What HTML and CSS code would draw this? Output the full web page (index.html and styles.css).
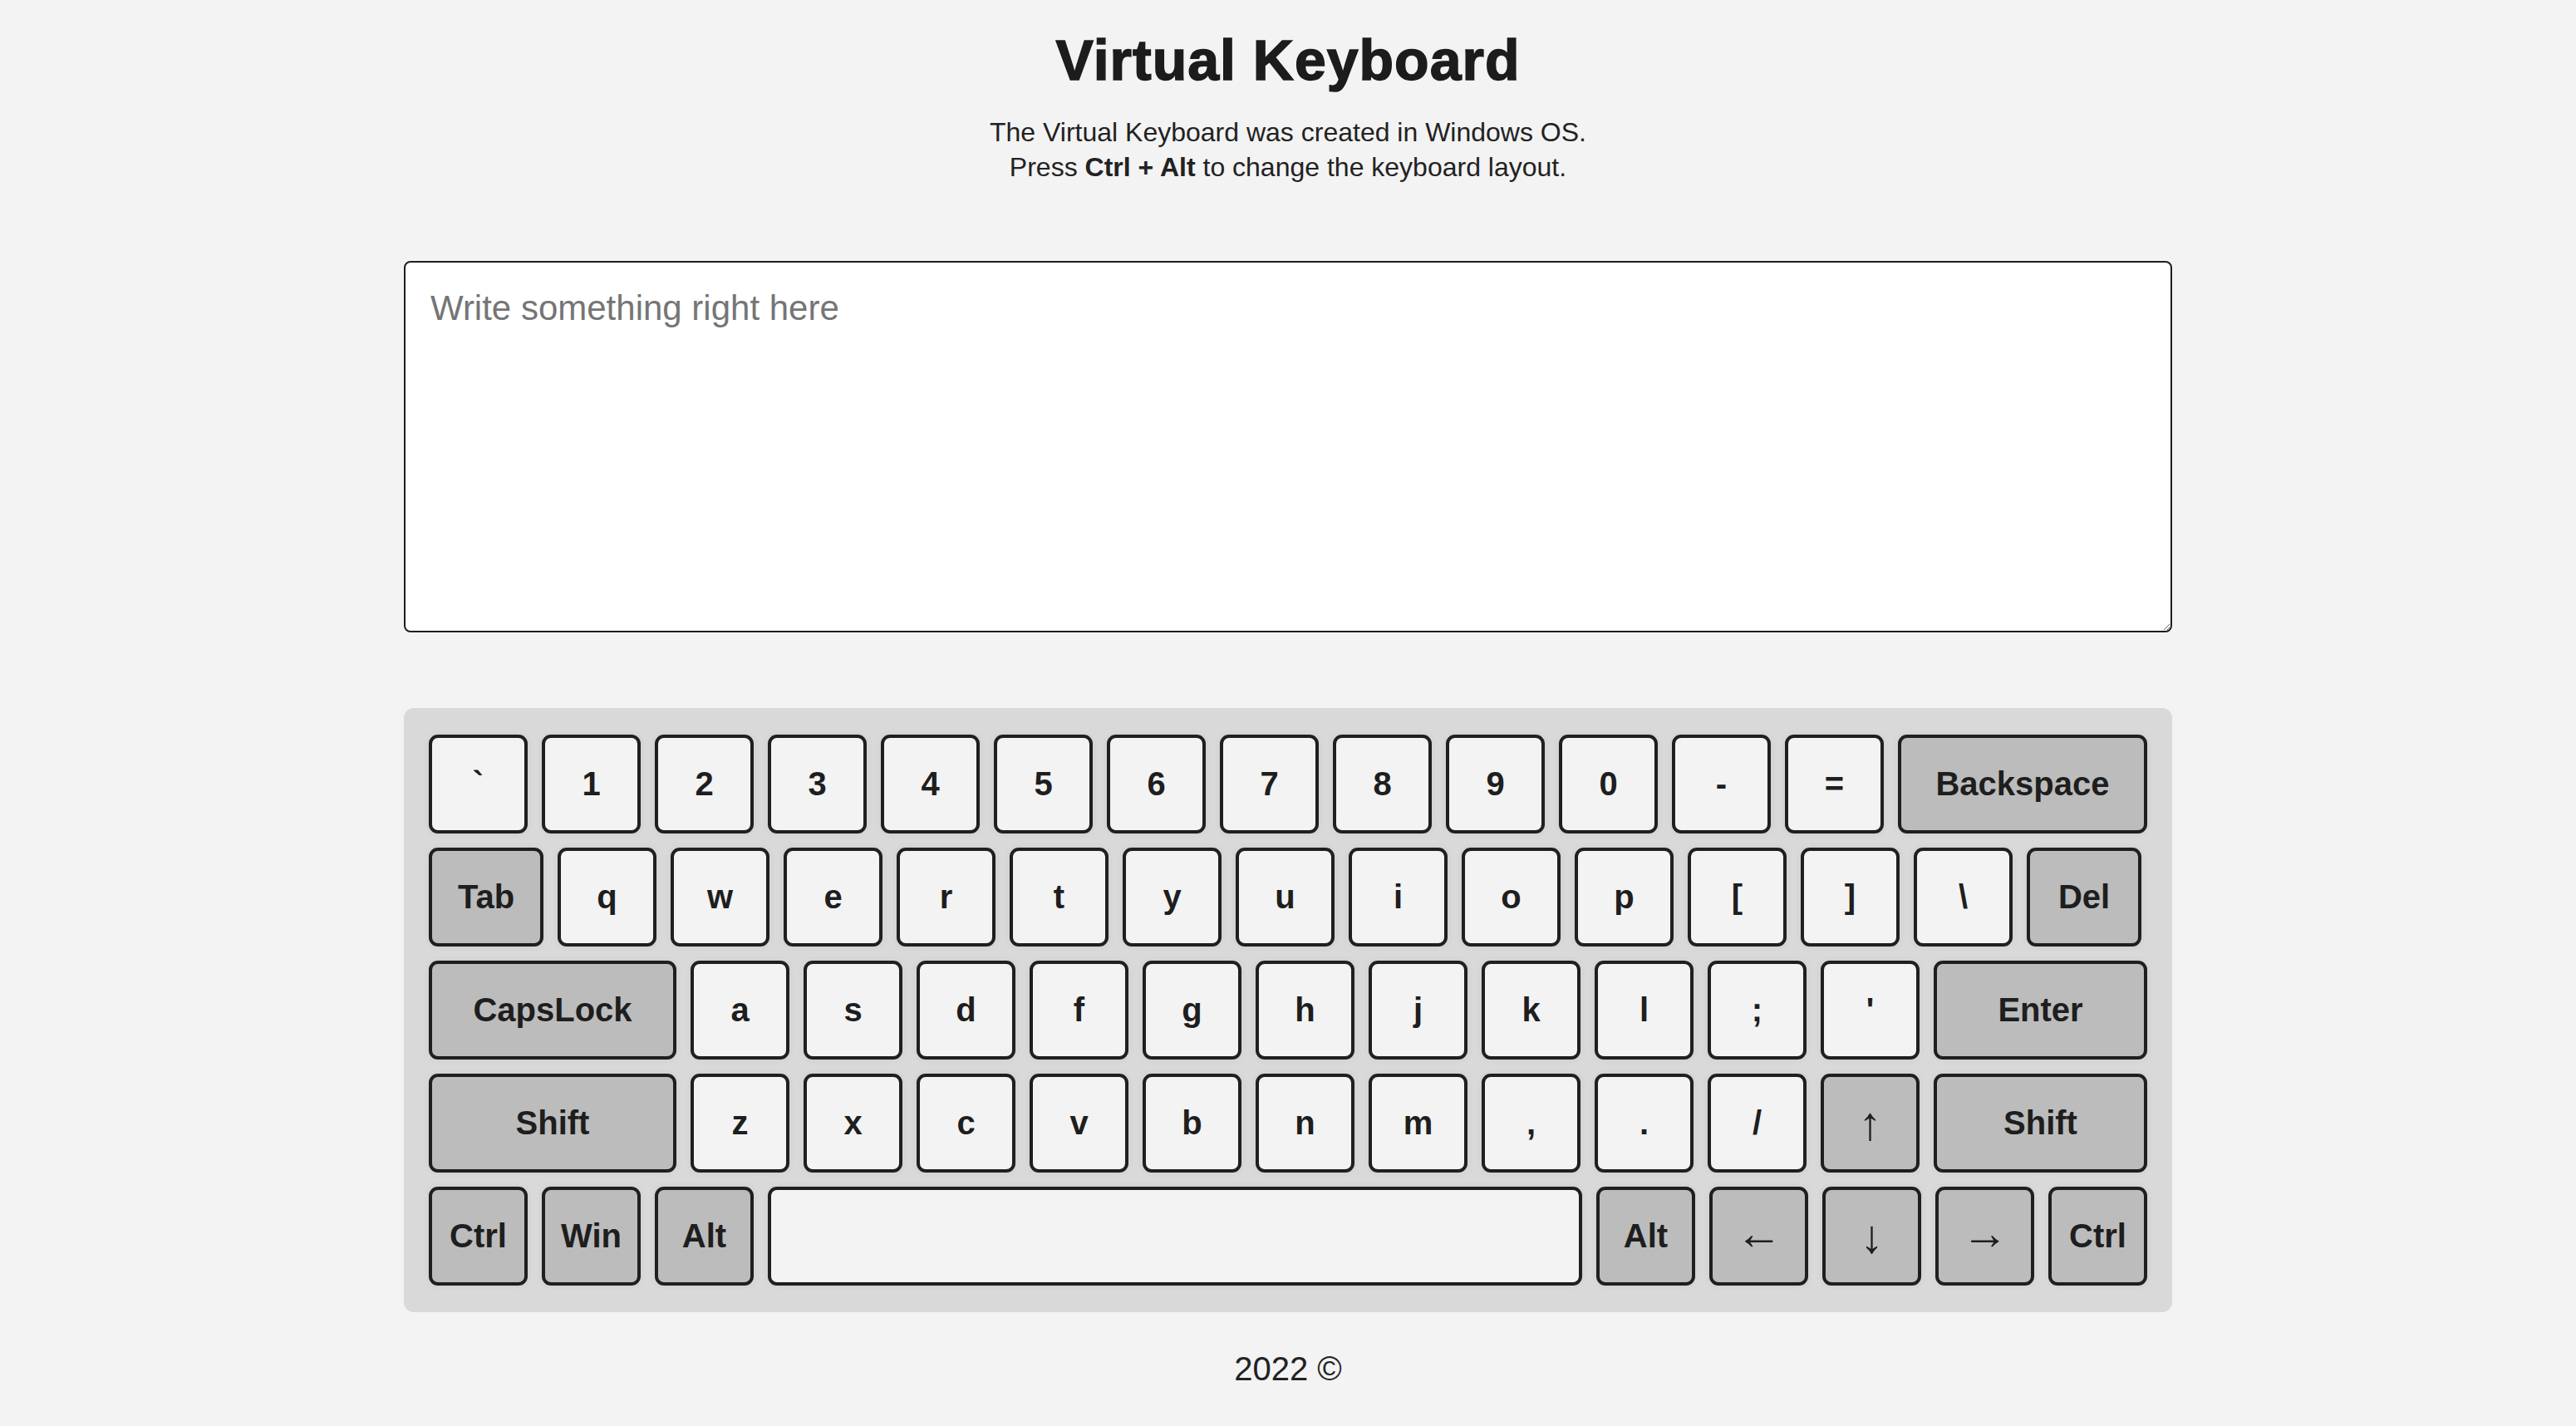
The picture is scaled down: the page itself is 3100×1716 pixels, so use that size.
FILE: index.html
```html
<!DOCTYPE html>
<html lang="en">
<head>
<meta charset="utf-8">
<title>Virtual Keyboard</title>
<link rel="stylesheet" href="styles.css">
</head>
<body>
<main class="page">
  <h1 class="title">Virtual Keyboard</h1>
  <p class="subtitle">The Virtual Keyboard was created in Windows OS.<br>Press <b>Ctrl + Alt</b> to change the keyboard layout.</p>
  <textarea class="input" placeholder="Write something right here"></textarea>
  <section class="keyboard">
    <div class="row">
      <div class="key">`</div><div class="key">1</div><div class="key">2</div><div class="key">3</div><div class="key">4</div><div class="key">5</div><div class="key">6</div><div class="key">7</div><div class="key">8</div><div class="key">9</div><div class="key">0</div><div class="key">-</div><div class="key">=</div><div class="key fn grow">Backspace</div>
    </div>
    <div class="row">
      <div class="key fn side">Tab</div><div class="key">q</div><div class="key">w</div><div class="key">e</div><div class="key">r</div><div class="key">t</div><div class="key">y</div><div class="key">u</div><div class="key">i</div><div class="key">o</div><div class="key">p</div><div class="key">[</div><div class="key">]</div><div class="key">\</div><div class="key fn side">Del</div>
    </div>
    <div class="row">
      <div class="key fn wide">CapsLock</div><div class="key">a</div><div class="key">s</div><div class="key">d</div><div class="key">f</div><div class="key">g</div><div class="key">h</div><div class="key">j</div><div class="key">k</div><div class="key">l</div><div class="key">;</div><div class="key">'</div><div class="key fn grow">Enter</div>
    </div>
    <div class="row">
      <div class="key fn wide">Shift</div><div class="key">z</div><div class="key">x</div><div class="key">c</div><div class="key">v</div><div class="key">b</div><div class="key">n</div><div class="key">m</div><div class="key">,</div><div class="key">.</div><div class="key">/</div><div class="key fn arrow">↑</div><div class="key fn grow">Shift</div>
    </div>
    <div class="row">
      <div class="key fn">Ctrl</div><div class="key fn">Win</div><div class="key fn">Alt</div><div class="key grow"></div><div class="key fn">Alt</div><div class="key fn arrow harrow">←</div><div class="key fn arrow">↓</div><div class="key fn arrow harrow">→</div><div class="key fn">Ctrl</div>
    </div>
  </section>
  <footer class="footer">2022 ©</footer>
</main>
</body>
</html>
```

FILE: styles.css
```css
html, body {
  margin: 0;
  padding: 0;
}

body {
  background: #f3f3f3;
  color: #222222;
  font-family: "Liberation Sans", Arial, sans-serif;
}

.page {
  width: 2128px;
  margin: 0 auto;
  display: flex;
  flex-direction: column;
  align-items: stretch;
}

.title {
  margin: 31px 0 0;
  font-size: 68px;
  line-height: 82px;
  font-weight: 700;
  letter-spacing: 1px;
  text-align: center;
  color: #1c1c1c;
  -webkit-text-stroke: 1.5px #1c1c1c;
}

.subtitle {
  margin: 26px 0 0;
  font-size: 32px;
  line-height: 41.5px;
  text-align: center;
  color: #222222;
}

.subtitle b {
  font-weight: 700;
}

.input {
  box-sizing: border-box;
  display: block;
  width: 2128px;
  height: 447px;
  margin: 92px 0 0;
  padding: 31px 30px;
  border: 2px solid #1e1e1e;
  border-radius: 8px;
  background: #ffffff;
  font-family: "Liberation Sans", Arial, sans-serif;
  font-size: 42px;
  color: #222222;
  outline: none;
}

.input::placeholder {
  color: #757575;
}

.keyboard {
  margin-top: 91px;
  padding: 32px 30px;
  background: #d9d9d9;
  border-radius: 12px;
  display: flex;
  flex-direction: column;
  gap: 17px;
}

.row {
  display: flex;
  gap: 17px;
}

.key {
  box-sizing: border-box;
  flex: 0 0 119px;
  height: 119px;
  display: flex;
  align-items: center;
  justify-content: center;
  background: #f3f3f3;
  border: 4px solid #1f1f1f;
  border-radius: 11px;
  font-size: 40px;
  font-weight: 700;
  color: #1e1e1e;
  box-shadow: 0 0 8px rgba(0, 0, 0, 0.06);
}

.key.fn {
  background: #bcbcbc;
}

.key.side {
  flex: 0 0 138px;
}

.key.wide {
  flex: 0 0 298px;
}

.key.grow {
  flex: 1 1 auto;
}

.key.arrow {
  font-weight: 400;
  font-size: 56px;
  line-height: 1;
}

.key.harrow {
  padding-bottom: 7px;
}

.footer {
  margin: 45px 0 0;
  font-size: 40px;
  line-height: 46px;
  text-align: center;
  color: #222222;
}
```
